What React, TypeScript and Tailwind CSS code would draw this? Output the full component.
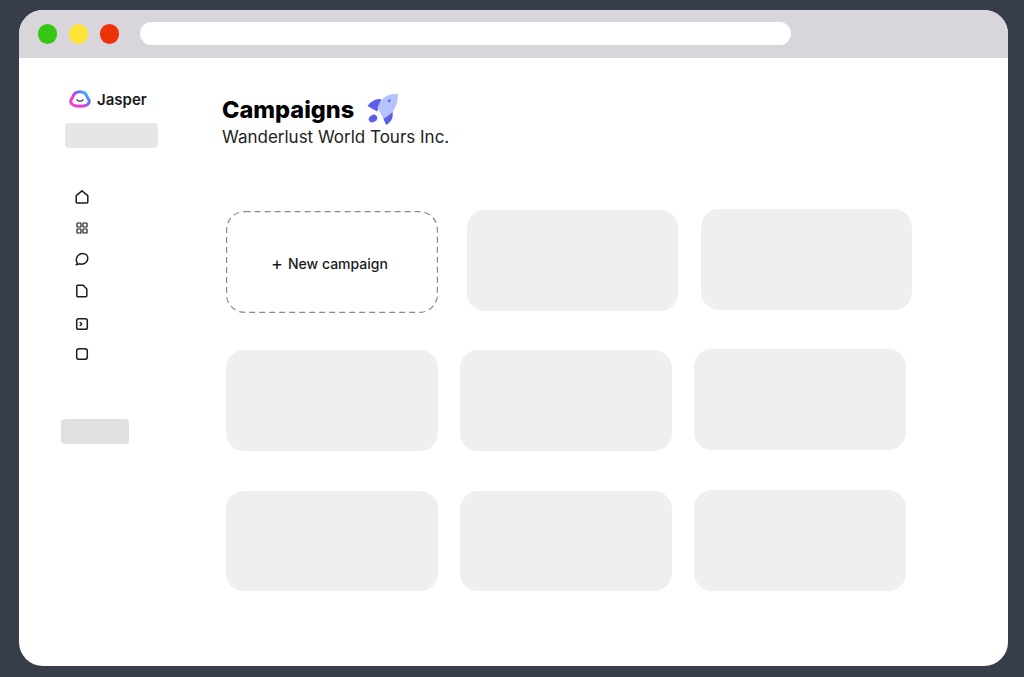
import type { ReactNode } from "react";

function JasperLogo() {
  return (
    <svg width="22" height="18" viewBox="0 0 22 18" fill="none">
      <defs>
        <linearGradient id="jasperRing" x1="18" y1="2" x2="5" y2="15" gradientUnits="userSpaceOnUse">
          <stop offset="0" stopColor="#2fc8f5" />
          <stop offset="0.35" stopColor="#6f6cf2" />
          <stop offset="0.65" stopColor="#d93fe6" />
          <stop offset="1" stopColor="#f53fd0" />
        </linearGradient>
      </defs>
      <path
        d="M11 1.700C15 1.700 17.400 4.200 18.300 7C18.900 8.700 20.300 9.400 20.300 11.300C20.300 14.400 16.500 16.300 11 16.300C5.500 16.300 1.700 14.400 1.700 11.300C1.700 9.400 3.100 8.700 3.700 7C4.600 4.200 7 1.700 11 1.700Z"
        stroke="url(#jasperRing)"
        strokeWidth="3"
      />
      <path d="M8 9.800c.8 1.900 5.200 1.900 6 0" stroke="#222" strokeWidth="1.200" strokeLinecap="round" />
    </svg>
  );
}

function Rocket() {
  return (
    <svg width="32" height="32" viewBox="0 0 32 32" fill="none">
      <path d="M13.500 5C8.500 4.800 3.500 7.500.5 12L10 17.500L14.500 8Z" fill="#5a5fe6" />
      <path d="M25 16C27 22 25 28 19 31L15 21Z" fill="#5a5fe6" />
      <path d="M31 .2C24 -.5 17 2 13 8C11.800 10 11 12 10.500 14L16.500 24.500C24.500 21 31 13 31 .2Z" fill="#b5c2fb" />
      <circle cx="22.300" cy="6.700" r="1.300" fill="#5a5fe6" />
      <ellipse cx="6" cy="24.500" rx="4.500" ry="3.500" transform="rotate(-35 6 24.500)" fill="#5a5fe6" />
    </svg>
  );
}

const iconProps = {
  width: 14,
  height: 14,
  viewBox: "0 0 14 14",
  fill: "none",
  stroke: "#1c1c1c",
  strokeWidth: 1.5,
  strokeLinejoin: "round" as const,
  strokeLinecap: "round" as const,
};

const NAV_ICONS: ReactNode[] = [
  <svg {...iconProps}>
    <path d="M7 .8 12.500 5.400c.2.200.3.400.3.700v6c0 .6-.4 1-1 1H2.200c-.6 0-1-.4-1-1v-6c0-.3.1-.5.3-.7L7 .8Z" />
  </svg>,
  <svg {...iconProps} strokeWidth={1.2}>
    <rect x="2" y="2" width="4" height="4" rx="0.6" />
    <rect x="8" y="2" width="4" height="4" rx="0.6" />
    <rect x="2" y="8" width="4" height="4" rx="0.6" />
    <rect x="8" y="8" width="4" height="4" rx="0.6" />
  </svg>,
  <svg {...iconProps}>
    <path d="M1.300 12.800c.7-.5 1-1.100 1-1.900C1.500 9.900 1.200 8.900 1.300 7.700 1.500 4.300 4.300 1.500 7.700 1.500c2.900 0 5.100 2.100 5.100 4.800 0 3.400-2.900 5.900-6.300 5.900-.8 0-1.500-.1-2.200-.4-.9.500-2 .7-3 .6Z" />
  </svg>,
  <svg {...iconProps}>
    <path d="M2.800 1.200h5.400l3.600 3.700v6.900c0 .6-.4 1-1 1H2.800c-.6 0-1-.4-1-1V2.200c0-.6.400-1 1-1Z" />
  </svg>,
  <svg {...iconProps}>
    <rect x="1.700" y="1.800" width="10.600" height="10.400" rx="1.800" />
    <path d="M5.200 5.500 6.700 7 5.200 8.500" />
  </svg>,
  <svg {...iconProps}>
    <rect x="1.700" y="1.700" width="10.600" height="10.600" rx="2.400" />
  </svg>,
];

const NAV_GAPS = ["mb-[17px]", "mb-[17px]", "mb-[18px]", "mb-[19px]", "mb-[16px]", ""];

function Card({ className = "" }: { className?: string }) {
  return <div className={`shrink-0 rounded-[18px] bg-[#efefef] ${className}`} />;
}

export default function App() {
  return (
    <div className="h-[677px] w-[1024px] overflow-hidden bg-[#383d4a] pl-[19px] pt-[10px] font-['Inter',sans-serif]">
      <div className="flex h-[656px] w-[989px] flex-col overflow-hidden rounded-[24px] bg-white">
        <div className="flex h-[48px] shrink-0 items-center gap-[21px] bg-[#d8d6da] pb-[1px] pl-[19px]">
          <div className="flex gap-[12px]">
            <span className="h-[20px] w-[19px] rounded-full bg-[#36c715]" />
            <span className="h-[20px] w-[19px] rounded-full bg-[#fde334]" />
            <span className="h-[20px] w-[19px] rounded-full bg-[#ec3308]" />
          </div>
          <div className="h-[23px] w-[651px] rounded-full bg-white" />
        </div>

        <div className="flex flex-1">
          <aside className="w-[203px] shrink-0 pl-[42px] pt-[31px]">
            <div className="ml-[8px] flex h-[20px] items-center gap-[6px]">
              <JasperLogo />
              <span className="text-[15px] font-semibold leading-none text-[#1a1a1a]">Jasper</span>
            </div>
            <div className="ml-[4px] mt-[14px] h-[25px] w-[93px] rounded-[4px] bg-[#e6e6e6]" />
            <nav className="ml-[14px] mt-[42px] flex flex-col">
              {NAV_ICONS.map((icon, i) => (
                <div key={i} className={`h-[14px] w-[14px] ${NAV_GAPS[i]}`}>
                  {icon}
                </div>
              ))}
            </nav>
            <div className="mt-[58px] h-[25px] w-[68px] rounded-[4px] bg-[#e0e0e0]" />
          </aside>

          <main className="flex-1 pt-[36px]">
            <div className="flex h-[32px] items-center gap-[13px]">
              <h1 className="text-[23.500px] font-extrabold leading-none text-black">Campaigns</h1>
              <Rocket />
            </div>
            <p className="mt-[1px] text-[17px] leading-[20px] text-[#222]">Wanderlust World Tours Inc.</p>

            <div className="ml-[4px] mt-[64px] flex flex-col">
              <div className="flex h-[103px] items-start">
                <button className="relative flex h-[102px] w-[212px] shrink-0 items-center justify-center pr-[5px] pt-[3px] text-[14px] font-medium text-[#1a1a1a]">
                  <svg className="absolute left-0 top-0" width="212" height="102" fill="none">
                    <rect x="0.600" y="0.600" width="210.800" height="100.800" rx="18" stroke="#8a8a8a" strokeWidth="1.200" strokeDasharray="6 4" />
                  </svg>
                  <span className="mr-[5px] text-[18px] font-normal leading-none">+</span>New campaign
                </button>
                <Card className="-mt-[1px] ml-[29px] h-[101px] w-[211px]" />
                <Card className="-mt-[2px] ml-[23px] h-[101px] w-[211px]" />
              </div>
              <div className="mt-[36px] flex h-[101px] items-start">
                <Card className="h-[101px] w-[212px]" />
                <Card className="ml-[22px] h-[101px] w-[212px]" />
                <Card className="-mt-[1px] ml-[22px] h-[101px] w-[212px]" />
              </div>
              <div className="mt-[40px] flex h-[101px] items-start">
                <Card className="h-[100px] w-[212px]" />
                <Card className="ml-[22px] h-[100px] w-[212px]" />
                <Card className="-mt-[1px] ml-[22px] h-[101px] w-[212px]" />
              </div>
            </div>
          </main>
        </div>
      </div>
    </div>
  );
}
